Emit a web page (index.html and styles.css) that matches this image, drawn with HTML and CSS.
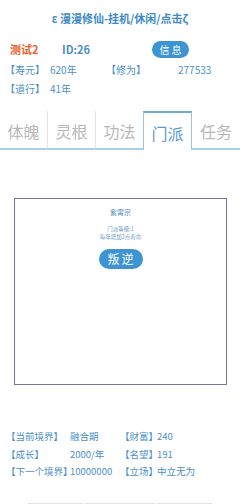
FILE: index.html
```html
<!DOCTYPE html>
<html lang="zh">
<head>
<meta charset="UTF-8">
<meta name="viewport" content="width=device-width, initial-scale=1.0">
<title>漫漫修仙</title>
<link rel="stylesheet" href="styles.css">
</head>
<body>

<div class="title">ε 漫漫修仙-挂机/休闲/点击ζ</div>

<div class="info-row">
  <span class="name">测试2</span>
  <span class="uid">ID:26</span>
  <span class="btn info-btn">信息</span>
</div>

<div class="attr-row">
  <span class="c1">【寿元】</span>
  <span class="c2">620年</span>
  <span class="c3">【修为】</span>
  <span class="c4">277533</span>
</div>
<div class="attr-row">
  <span class="c1">【道行】</span>
  <span class="c2">41年</span>
</div>

<div class="tabs">
  <div class="tab">体魄</div>
  <div class="tab">灵根</div>
  <div class="tab">功法</div>
  <div class="tab active">门派</div>
  <div class="tab">任务</div>
</div>

<div class="sect-box">
  <div class="sect-name">紫霄宗</div>
  <div class="sect-desc">门派等级:1<br>每年增加2点寿命</div>
  <span class="btn betray-btn">叛逆</span>
</div>

<div class="stats">
  <span>【当前境界】</span><span>融合期</span><span>【财富】</span><span>240</span>
  <span>【成长】</span><span>2000/年</span><span>【名望】</span><span>191</span>
  <span>【下一个境界】</span><span>10000000</span><span>【立场】</span><span>中立无为</span>
</div>

<div class="bottom-bar">
  <div class="seg s1"></div>
  <div class="seg s2"></div>
  <div class="seg s3"></div>
</div>

</body>
</html>
```

FILE: styles.css
```css
body {
  margin: 0;
  width: 240px;
  height: 504px;
  overflow: hidden;
  background: #fff;
  font-family: "Noto Sans CJK SC", "Noto Sans", sans-serif;
  color: #3d8ac4;
}

.title {
  text-align: center;
  font-size: 11px;
  font-weight: bold;
  line-height: 14px;
  padding-top: 11px;
  color: #3d8ac4;
}

.info-row {
  display: flex;
  align-items: center;
  height: 18px;
  margin-top: 15px;
  font-size: 11px;
  font-weight: bold;
}
.info-row .name {
  margin-left: 10px;
  width: 52px;
  color: #e8622d;
}
.info-row .uid {
  width: 90px;
  color: #4a8fc4;
}

.btn {
  display: inline-block;
  background: #3c94d3;
  color: #fff;
  text-align: center;
  border-radius: 10px;
}
.info-btn {
  width: 37px;
  height: 17px;
  line-height: 17px;
  font-size: 10px;
  font-weight: normal;
  letter-spacing: 2px;
  text-indent: 2px;
}

.attr-row {
  display: flex;
  font-size: 10px;
  line-height: 19px;
  color: #4a90c8;
}
.attr-row .c1 { margin-left: 5px; width: 45px; }
.attr-row .c2 { width: 56px; }
.attr-row .c3 { width: 72px; }

.info-row + .attr-row { margin-top: 2px; }

.tabs {
  display: grid;
  grid-template-columns: repeat(5, 48px);
  margin-top: 13px;
  height: 39px;
  font-size: 16px;
}
.tab {
  display: flex;
  align-items: center;
  justify-content: center;
  color: #b8b8b8;
  border-right: 1px solid #e3e3e3;
  border-bottom: 2px solid #a9cfe6;
  box-sizing: border-box;
  padding-top: 2px;
}
.tab:last-child { border-right: none; }
.tab.active {
  color: #5a9acb;
  border-top: 2px solid #6aaed6;
  border-left: 1px solid #9cc6e0;
  border-right: 1px solid #9cc6e0;
  border-bottom: none;
  margin-left: -1px;
}

.sect-box {
  margin: 48px 13px 0 14px;
  height: 187px;
  border: 1.5px solid #7474a8;
  box-sizing: border-box;
  text-align: center;
}
.sect-name {
  font-size: 7px;
  margin-top: 8px;
  line-height: 10px;
  color: #5b8fc0;
}
.sect-desc {
  font-size: 5.5px;
  line-height: 8px;
  margin-top: 8px;
  color: #6e9cc6;
}
.betray-btn {
  margin-top: 8px;
  width: 44px;
  height: 20px;
  line-height: 20px;
  font-size: 12px;
  letter-spacing: 2px;
  text-indent: 2px;
}

.stats {
  display: grid;
  grid-template-columns: 64px 50px 37px auto;
  margin: 43px 0 0 6px;
  font-size: 9.5px;
  line-height: 17.5px;
  color: #4a90c8;
}

.bottom-bar {
  display: flex;
  margin-top: 22px;
  height: 3px;
}
.seg { height: 3px; background: #e6e2e2; }
.s1 { margin-left: 28px; width: 55px; }
.s2 { margin-left: 2px; width: 70px; }
.s3 { margin-left: 2px; width: 55px; }
```
